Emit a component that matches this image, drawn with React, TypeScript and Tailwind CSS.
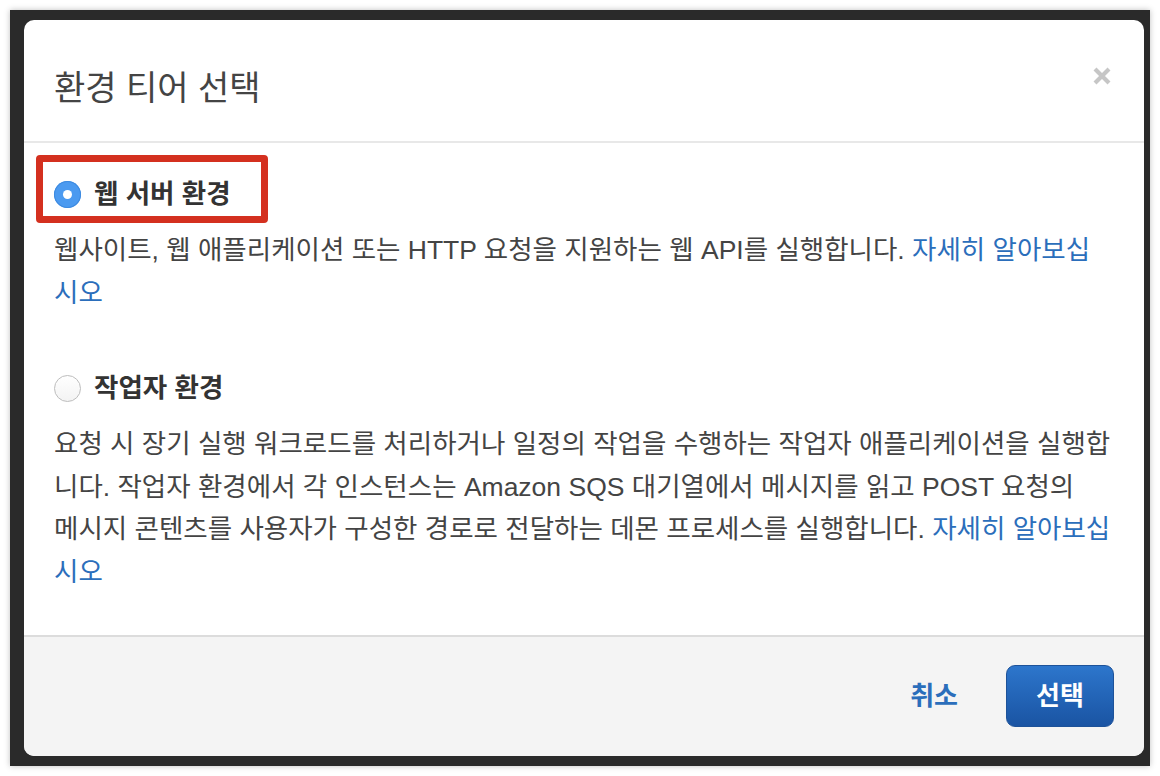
import React from "react";

const font = {
  fontFamily: '"Liberation Sans", "Noto Sans CJK KR", sans-serif',
};

const Radio = ({ checked }: { checked?: boolean }) =>
  checked ? (
    <span className="flex size-[27px] shrink-0 items-center justify-center rounded-full bg-[#4b9af0] shadow-[inset_0_0_0_1px_#3d8ae0]">
      <span className="size-[9px] rounded-full bg-white" />
    </span>
  ) : (
    <span className="size-[27px] shrink-0 rounded-full border-[1.5px] border-[#bdbdbd] bg-gradient-to-b from-white to-[#f3f3f3]" />
  );

const App = () => {
  return (
    <div className="h-[776px] w-[1160px] bg-white pt-[10px] pl-[10px]" style={font}>
      <div className="h-[756px] w-[1140px] bg-[#2a2a2a] pt-[10px] pl-[14px] shadow-[0_0_6px_rgba(0,0,0,0.25)]">
        <div className="flex h-[736px] w-[1120px] flex-col overflow-hidden rounded-[10px] bg-white">
          {/* header */}
          <div className="flex h-[123px] shrink-0 items-start justify-between border-b-2 border-[#e8e8e8] pr-[33px] pl-[30px]">
            <h1 className="mt-[48px] text-[34px] leading-[40px] text-[#444]">
              환경 티어 선택
            </h1>
            <button className="mt-[47px] p-0" title="close">
              <svg width="18" height="18" viewBox="0 0 18 18">
                <path
                  d="M2 2 L16 16 M16 2 L2 16"
                  stroke="#c6c6c6"
                  strokeWidth="4.2"
                  strokeLinecap="butt"
                />
              </svg>
            </button>
          </div>

          {/* body */}
          <div className="h-[492px] shrink-0 pl-[30px] text-[26.5px] text-[#444]">
            <div className="relative mt-[38px] flex h-[27px] items-center gap-[13px]">
              <Radio checked />
              <span className="font-bold text-[#333]">웹 서버 환경</span>
              <div className="absolute top-[-26px] left-[-18px] h-[68px] w-[232px] rounded-[4px] border-[7px] border-[#d4301f]" />
            </div>
            <p className="mt-[21px] leading-[43px]">
              웹사이트, 웹 애플리케이션 또는 HTTP 요청을 지원하는 웹 API를
              실행합니다.{" "}
              <a className="text-[#2b6ebb]">
                자세히 알아보십
                <br />
                시오
              </a>
            </p>

            <div className="mt-[60px] flex h-[27px] items-center gap-[13px]">
              <Radio />
              <span className="font-bold text-[#333]">작업자 환경</span>
            </div>
            <p className="mt-[21px] leading-[42.5px]">
              요청 시 장기 실행 워크로드를 처리하거나 일정의 작업을 수행하는
              작업자 애플리케이션을 실행합
              <br />
              니다. 작업자 환경에서 각 인스턴스는 Amazon SQS 대기열에서
              메시지를 읽고 POST 요청의
              <br />
              메시지 콘텐츠를 사용자가 구성한 경로로 전달하는 데몬 프로세스를
              실행합니다.{" "}
              <a className="text-[#2b6ebb]">
                자세히 알아보십
                <br />
                시오
              </a>
            </p>
          </div>

          {/* footer */}
          <div className="flex flex-1 items-start justify-end gap-[48px] border-t-2 border-[#dcdcdc] bg-[#f4f4f4] pt-[28px] pr-[30px]">
            <button className="mt-[14px] text-[26px] leading-[34px] font-bold text-[#2b6ebb]">
              취소
            </button>
            <button className="h-[62px] w-[108px] rounded-[9px] border border-[#1d5299] bg-gradient-to-b from-[#2d76cc] to-[#1a54a3] text-[26px] font-bold text-white">
              선택
            </button>
          </div>
        </div>
      </div>
    </div>
  );
};

export default App;
